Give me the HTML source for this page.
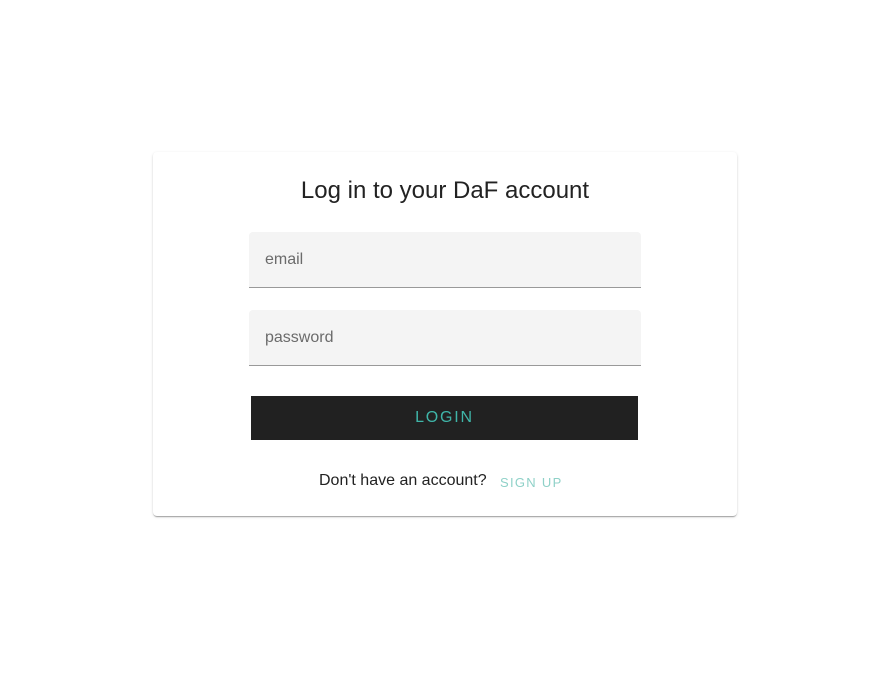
<!DOCTYPE html>
<html><head><style>
body{margin:0;width:882px;height:683px;background:#fff;font-family:"Liberation Sans",Arial,sans-serif;position:relative}
.card{position:absolute;left:153px;top:152px;width:584px;height:364px;background:#fff;border-radius:4px;box-shadow:0 2px 1px -1px rgba(0,0,0,.2),0 1px 1px 0 rgba(0,0,0,.14),0 1px 3px 0 rgba(0,0,0,.12)}
h1{position:absolute;top:26px;left:0;width:100%;text-align:center;margin:0;font-size:24px;font-weight:400;color:#222;line-height:26px}
.f{position:absolute;left:96px;width:392px;height:56px;background:#f4f4f4;border-bottom:1px solid #999;border-radius:4px 4px 0 0;box-sizing:border-box}
.f span{position:absolute;left:16px;top:19px;font-size:16px;color:#6b6b6b}
.btn{position:absolute;left:98px;top:244px;width:387px;height:44px;background:#212121;color:#3fb5a8;font-size:16px;letter-spacing:1.8px;text-align:center;line-height:44px}
.s{position:absolute;top:320px;left:166px;font-size:16px;color:#222}
.u{position:absolute;top:323px;left:347px;font-size:13px;letter-spacing:1.3px;color:#8fd1c8}
</style></head><body>
<div class="card">
<h1>Log in to your DaF account</h1>
<div class="f" style="top:80px"><span>email</span></div>
<div class="f" style="top:158px"><span>password</span></div>
<div class="btn">LOGIN</div>
<div class="s">Don't have an account?</div>
<div class="u">SIGN UP</div>
</div>
</body></html>
